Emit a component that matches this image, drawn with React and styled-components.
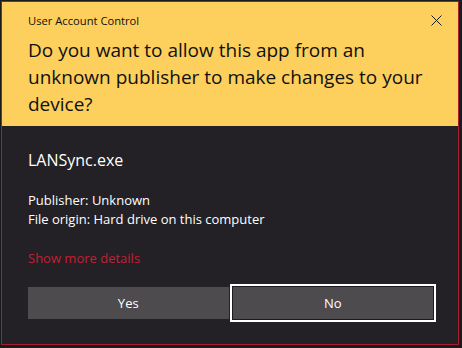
import React from "react";
import styled, { createGlobalStyle } from "styled-components";

const GlobalStyle = createGlobalStyle`
  html, body {
    margin: 0;
    padding: 0;
    background: #1b1a1c;
  }
  body {
    font-family: "Open Sans", "Noto Sans", sans-serif;
  }
`;

function CloseIcon() {
  return (
    <svg width="11" height="11" viewBox="0 0 11 11">
      <path d="M0.5 0.5 L10.5 10.5 M10.5 0.5 L0.5 10.5" stroke="#1a1a1a" strokeWidth="1" />
    </svg>
  );
}

function App() {
  return (
    <>
      <GlobalStyle />
      <Frame>
        <Dialog>
          <Header>
            <TitleBar>
              <Caption>User Account Control</Caption>
              <CloseButton aria-label="Close">
                <CloseIcon />
              </CloseButton>
            </TitleBar>
            <Question>
              Do you want to allow this app from an unknown publisher to make
              changes to your device?
            </Question>
          </Header>
          <Body>
            <AppName>LANSync.exe</AppName>
            <Details>
              <div>Publisher: Unknown</div>
              <div>File origin: Hard drive on this computer</div>
            </Details>
            <MoreLink>Show more details</MoreLink>
            <Buttons>
              <Button>Yes</Button>
              <Button $focused>No</Button>
            </Buttons>
          </Body>
        </Dialog>
      </Frame>
    </>
  );
}

export default App;

const Frame = styled.div`
  width: 462px;
  height: 348px;
  padding: 1px 3px 3px 1px;
  box-sizing: border-box;
`;

const Dialog = styled.div`
  width: 458px;
  height: 344px;
  box-sizing: border-box;
  border: 1px solid #a61f30;
  background: #232125;
  display: flex;
  flex-direction: column;
`;

const Header = styled.div`
  background: #fdcf5c;
  height: 124px;
  flex-shrink: 0;
  padding: 0 0 0 26px;
  color: #111;
`;

const TitleBar = styled.div`
  display: flex;
  align-items: center;
  justify-content: space-between;
  height: 36px;
`;

const Caption = styled.div`
  font-size: 11.2px;
`;

const CloseButton = styled.div`
  width: 40px;
  height: 36px;
  display: flex;
  align-items: center;
  justify-content: center;
  margin-right: 2px;
`;

const Question = styled.div`
  font-size: 19px;
  line-height: 27px;
  padding-right: 20px;
  margin-top: -1px;
`;

const Body = styled.div`
  padding: 23px 0 0 26px;
  color: #fff;
  display: flex;
  flex-direction: column;
`;

const AppName = styled.div`
  font-size: 16px;
  line-height: 22px;
`;

const Details = styled.div`
  margin-top: 20px;
  font-size: 13px;
  line-height: 19px;
`;

const MoreLink = styled.div`
  margin-top: 20px;
  font-size: 13px;
  line-height: 18px;
  color: #c42036;
`;

const Buttons = styled.div`
  display: flex;
  gap: 4px;
  width: 405px;
  margin-top: 20px;
`;

const Button = styled.div`
  flex: 1;
  height: 32px;
  display: flex;
  align-items: center;
  justify-content: center;
  font-size: 13px;
  background: #4d4b4e;
  color: #fff;
  ${(p) =>
    p.$focused &&
    `
    box-shadow: 0 0 0 1px #1b1a1c, 0 0 0 3px #fff;
  `}
`;
